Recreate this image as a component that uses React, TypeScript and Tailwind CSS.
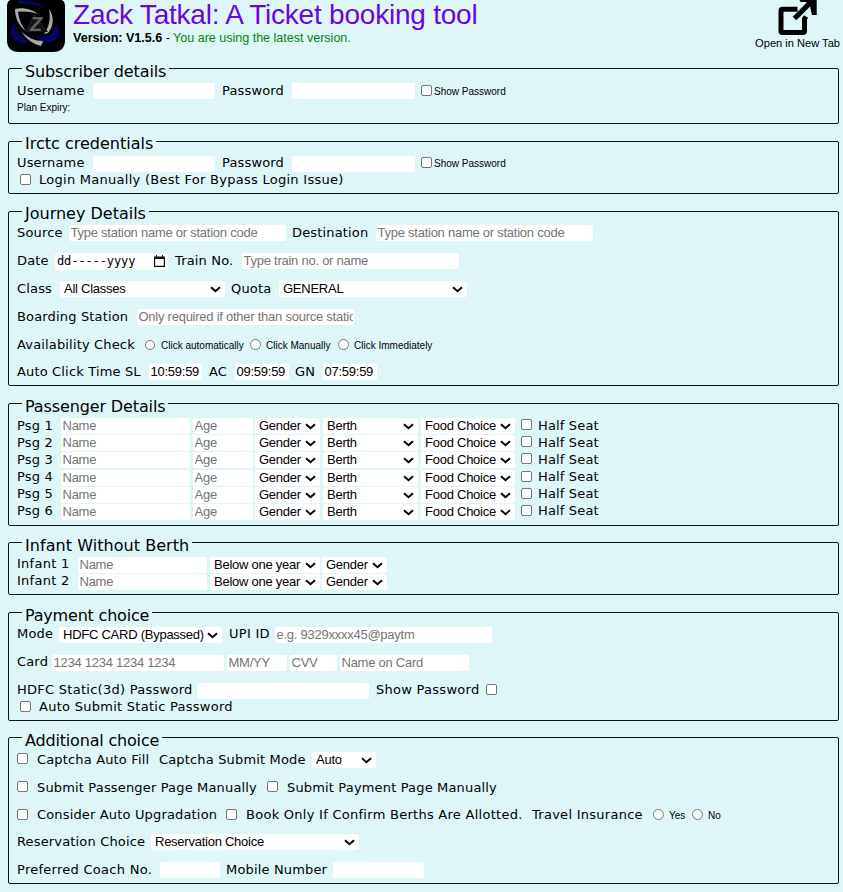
import React from "react";

const cx = (...parts: (string | undefined)[]) => parts.filter(Boolean).join(" ");

function Section({ title, className, legend = "leading-[21px]", children }: { title: string; className: string; legend?: string; children: React.ReactNode }) {
  return (
    <section className={cx("flex flex-col items-start rounded-[2px] border border-[#0c1414] pl-2", className)}>
      <h2 className={cx("-mt-2 ml-[5px] h-5 shrink-0 whitespace-nowrap bg-[#dff6f9] px-[3px] text-[16px]", legend)}>{title}</h2>
      {children}
    </section>
  );
}

function Row({ className, children }: { className?: string; children: React.ReactNode }) {
  return <div className={cx("flex h-4 shrink-0 items-center", className)}>{children}</div>;
}

interface LabelProps {
  className?: string;
  raised?: boolean;
  wide?: boolean;
  children: React.ReactNode;
}

function Label({ className, raised, wide, children }: LabelProps) {
  return (
    <span className={cx("shrink-0 whitespace-nowrap text-[13px] leading-4", raised ? "-mt-[2px]" : "mt-0", wide ? "tracking-[0.27px]" : "tracking-[0.16px]", className)}>
      {children}
    </span>
  );
}

function Small({ className = "mt-[2px]", children }: { className?: string; children: React.ReactNode }) {
  return <span className={cx("shrink-0 whitespace-nowrap font-['Liberation_Sans',Arial,sans-serif] text-[10px] leading-3", className)}>{children}</span>;
}

function Field({ className, placeholder, value }: { className: string; placeholder?: string; value?: string }) {
  return (
    <input
      className={cx(
        "h-4 shrink-0 rounded-[2px] bg-white pl-[1.5px] pr-px font-['Liberation_Sans',Arial,sans-serif] text-[13px] leading-4 tracking-[-0.25px] placeholder:text-[#757575] outline-none",
        className,
      )}
      placeholder={placeholder}
      defaultValue={value}
    />
  );
}

function Select({ className, children }: { className: string; children: string }) {
  return (
    <div className={cx("relative h-4 shrink-0", className)}>
      <select className="block h-full w-full appearance-none rounded-[2px] bg-white pl-1 font-['Liberation_Sans',Arial,sans-serif] text-[13px] leading-4 tracking-[-0.25px] outline-none">
        <option>{children}</option>
      </select>
      <svg className="pointer-events-none absolute right-1 top-[5px] h-[7px] w-[11px]" viewBox="0 0 11 7">
        <path d="M1 1.2 L5.5 5.2 L10 1.2" fill="none" stroke="#000" strokeWidth="2" />
      </svg>
    </div>
  );
}

function Check({ className }: { className?: string }) {
  return <input type="checkbox" className={cx("size-[11px] shrink-0 appearance-none rounded-[2px] border border-[#767676] bg-white", className)} />;
}

function Radio({ className, name }: { className?: string; name: string }) {
  return <input type="radio" name={name} className={cx("shrink-0 appearance-none rounded-full border border-[#767676] bg-white", className)} />;
}

function Logo() {
  return (
    <svg className="h-[52px] w-[58px] shrink-0" viewBox="0 0 58 52">
      <path d="M3 0H55Q58 2 58 6V40Q58 52 46 52H12Q0 52 0 40V6Q0 2 3 0Z" fill="#000" />
      <g fill="#03065f">
        <path d="M11 0 C18 3 29 -3 40 10 C31 3 21 5 14 4 C11 3 10 2 11 0Z" />
        <path d="M8 22 C1 30 3 42 17 43 L24 42 C16 40 9 34 8 22Z" />
        <path d="M49 23 C55 30 54 42 41 42 C36 43 31 39 29 35 C38 38 48 36 49 23Z" />
      </g>
      <g fill="#aaa7ae">
        <path d="M8 9 C15 7 25 9 31 14 C23 11.5 16 11 11 12 C12 20 15 26 19 31 C11 25 8 17 8 9Z" />
        <path d="M42 9 C48 17 46 28 41 33 L37 34 C42 27 44 19 42 9Z" />
        <path d="M14 31 C21 38 28 41 36 41 L34 46 C26 44 19 39 14 31Z" />
      </g>
      <path d="M18 32 L27 13 L41 32Z" fill="#151516" />
      <text x="29" y="31" textAnchor="middle" fontFamily="Liberation Sans, Arial, sans-serif" fontSize="20" fontWeight="700" fontStyle="italic" fill="#626365">Z</text>
    </svg>
  );
}

function Header() {
  return (
    <header className="flex h-[68px] items-start pl-[7px] font-['Liberation_Sans',Arial,sans-serif]">
      <Logo />
      <div className="ml-2 flex flex-col whitespace-nowrap">
        <h1 className="h-[30px] text-[28px] leading-[30px] tracking-[-0.22px] text-[#6b06df]">Zack Tatkal: A Ticket booking tool</h1>
        <p className="text-[12.6px] leading-4 tracking-[-0.03px]">
          <b>Version: V1.5.6</b> - <span className="text-[#078407]">You are using the latest version.</span>
        </p>
      </div>
      <div className="ml-auto mr-[3px] flex flex-col items-center">
        <svg className="h-[36px] w-[40px]" viewBox="0 0 40 36">
          <path d="M19.5 9.3H4.5Q3 9.3 3 10.8V31Q3 32.5 4.5 32.5H25Q26.5 32.5 26.5 31V19L28 16.5" fill="none" stroke="#000" strokeWidth="5" />
          <path d="M16.5 18.5 L36 -1" stroke="#000" strokeWidth="5.2" />
          <path d="M21.5 0H38.7V15H33.9L32 6 L28 2H22.5Z" fill="#000" />
        </svg>
        <span className="mt-px text-[11.1px] leading-3 whitespace-nowrap">Open in New Tab</span>
      </div>
    </header>
  );
}

const passengers = [
  { n: 1, gap: "mt-[2px]", raised: false },
  { n: 2, gap: "mt-px", raised: false },
  { n: 3, gap: "mt-px", raised: false },
  { n: 4, gap: "mt-[2px]", raised: true },
  { n: 5, gap: "mt-px", raised: true },
  { n: 6, gap: "mt-px", raised: true },
];

export default function App() {
  return (
    <main className="h-[892px] w-[843px] overflow-hidden bg-[#dff6f9] font-['DejaVu_Sans',Verdana,sans-serif] text-black">
      <Header />
      <div className="flex flex-col gap-[17px] pl-2 pr-1">
        <Section title="Subscriber details" className="h-[56px]" legend="leading-[21px] tracking-[-0.13px]">
          <Row className="mt-[2px]">
            <Label className="w-[76px]">Username</Label>
            <Field className="mr-[7px] w-[122px]" />
            <Label className="w-[70px]">Password</Label>
            <Field className="mr-[6px] w-[123px]" />
            <Check className="-mt-[2px] mr-[2px]" />
            <Small>Show Password</Small>
          </Row>
          <Row>
            <Small className="mt-[2px] text-[9.6px]">Plan Expiry:</Small>
          </Row>
        </Section>

        <Section title="Irctc credentials" className="h-[53px]" legend="leading-[19px]">
          <Row className="mt-[2px]">
            <Label raised className="w-[76px]">Username</Label>
            <Field className="mr-[7px] w-[122px]" />
            <Label raised className="w-[70px]">Password</Label>
            <Field className="mr-[6px] w-[123px]" />
            <Check className="-mt-[3px] mr-[2px]" />
            <Small className="mt-0">Show Password</Small>
          </Row>
          <Row>
            <Check className="-mt-px ml-[3px] mr-2" />
            <Label wide>Login Manually (Best For Bypass Login Issue)</Label>
          </Row>
        </Section>

        <Section title="Journey Details" className="h-[175px]" legend="leading-[19px]">
          <Row className="mt-px">
            <Label className="w-[52px]">Source</Label>
            <Field className="mr-[6px] w-[217px]" placeholder="Type station name or station code" />
            <Label className="w-[84px]">Destination</Label>
            <Field className="w-[217px]" placeholder="Type station name or station code" />
          </Row>
          <Row className="mt-3">
            <Label className="w-[38px]">Date</Label>
            <div className="mr-[7px] flex h-[17px] w-[113px] shrink-0 items-center justify-between rounded-[2px] bg-white pl-[2px] pr-[3px]">
              <span className="font-['DejaVu_Sans_Mono',monospace] text-[12px] leading-4 tracking-[-0.1px]">dd-----yyyy</span>
              <svg className="h-3 w-[11px]" viewBox="0 0 11 12">
                <path d="M0 1.5H2V0H3V1.5H8V0H9V1.5H11V12H0ZM1.2 4V10.8H9.8V4Z" fill="#111" fillRule="evenodd" />
              </svg>
            </div>
            <Label className="w-[67px]">Train No.</Label>
            <Field className="w-[217px]" placeholder="Type train no. or name" />
          </Row>
          <Row className="mt-3">
            <Label className="w-[43px]">Class</Label>
            <Select className="mr-[6px] w-[165px]">All Classes</Select>
            <Label className="w-[48px]">Quota</Label>
            <Select className="w-[188px]">GENERAL</Select>
          </Row>
          <Row className="mt-3">
            <Label className="w-[120px]">Boarding Station</Label>
            <Field className="w-[217px]" placeholder="Only required if other than source station" />
          </Row>
          <Row className="mt-3">
            <Label className="w-[128px]">Availability Check</Label>
            <Radio name="availability" className="-mt-px mr-[6px] size-[10px]" />
            <Small className="mt-[2px] w-[89px]">Click automatically</Small>
            <Radio name="availability" className="-mt-px mr-[5px] size-[11px]" />
            <Small className="mt-[2px] w-[72px]">Click Manually</Small>
            <Radio name="availability" className="-mt-px mr-[5px] size-[11px]" />
            <Small>Click Immediately</Small>
          </Row>
          <Row className="mt-[11px]">
            <Label className="w-[132px]">Auto Click Time SL</Label>
            <Field className="mr-[7px] w-[53px]" value="10:59:59" />
            <Label className="w-[26px]">AC</Label>
            <Field className="mr-[6px] w-[54px]" value="09:59:59" />
            <Label className="w-[28px]">GN</Label>
            <Field className="w-[54px]" value="07:59:59" />
          </Row>
        </Section>

        <Section title="Passenger Details" className="h-[123px]" legend="leading-[21px] tracking-[-0.12px]">
          {passengers.map((p) => (
            <Row key={p.n} className={p.gap}>
              <Label raised={p.raised} className="w-[44px]">Psg {p.n}</Label>
              <Field className="mr-[3px] w-[129px]" placeholder="Name" />
              <Field className="mr-[2px] w-[60px]" placeholder="Age" />
              <Select className="mr-[3px] w-[65px]">Gender</Select>
              <Select className="mr-[3px] w-[95px]">Berth</Select>
              <Select className="mr-[6px] w-[94px]">Food Choice</Select>
              <Check className="-mt-[3px] mr-[6px]" />
              <Label raised={p.raised}>Half Seat</Label>
            </Row>
          ))}
        </Section>

        <Section title="Infant Without Berth" className="-mt-px h-[53px]" legend="leading-[21px] tracking-[0.05px]">
          {[1, 2].map((n) => (
            <Row key={n} className={n === 1 ? "mt-[2px]" : "mt-px"}>
              <Label raised wide className="w-[61px]">Infant {n}</Label>
              <Field className="mr-[3px] w-[129px]" placeholder="Name" />
              <Select className="mr-[2px] w-[110px]">Below one year</Select>
              <Select className="w-[65px]">Gender</Select>
            </Row>
          ))}
        </Section>

        <Section title="Payment choice" className="h-[109px]" legend="leading-[21px] tracking-[-0.2px]">
          <Row className="mt-[2px]">
            <Label raised className="w-[42px]">Mode</Label>
            <Select className="mr-[7px] w-[163px]">HDFC CARD (Bypassed)</Select>
            <Label raised wide className="w-[46px]">UPI ID</Label>
            <Field className="w-[217px]" placeholder="e.g. 9329xxxx45@paytm" />
          </Row>
          <Row className="mt-3">
            <Label raised className="w-[35px]">Card</Label>
            <Field className="mr-[3px] w-[172px]" placeholder="1234 1234 1234 1234" />
            <Field className="mr-[3px] w-[60px]" placeholder="MM/YY" />
            <Field className="mr-[3px] w-[47px]" placeholder="CVV" />
            <Field className="w-[129px]" placeholder="Name on Card" />
          </Row>
          <Row className="mt-3">
            <Label raised wide className="w-[180px]">HDFC Static(3d) Password</Label>
            <Field className="mr-[7px] w-[172px]" />
            <Label raised wide className="w-[110px]">Show Password</Label>
            <Check className="-mt-[3px]" />
          </Row>
          <Row>
            <Check className="-mt-px ml-[3px] mr-2" />
            <Label wide>Auto Submit Static Password</Label>
          </Row>
        </Section>

        <Section title="Additional choice" className="-mt-px h-[147px]" legend="leading-[21px] tracking-[-0.18px]">
          <Row className="mt-[2px]">
            <Check className="-mt-[3px] mr-[9px]" />
            <Label className="w-[122px]">Captcha Auto Fill</Label>
            <Label className="w-[153px]">Captcha Submit Mode</Label>
            <Select className="w-[64px]">Auto</Select>
          </Row>
          <Row className="mt-3">
            <Check className="-mt-[3px] mr-[9px]" />
            <Label className="w-[230px]">Submit Passenger Page Manually</Label>
            <Check className="-mt-[3px] mr-[9px]" />
            <Label>Submit Payment Page Manually</Label>
          </Row>
          <Row className="mt-[11px]">
            <Check className="-mt-px mr-[9px]" />
            <Label className="w-[189px]">Consider Auto Upgradation</Label>
            <Check className="-mt-px mr-[9px]" />
            <Label wide className="w-[286px]">Book Only If Confirm Berths Are Allotted.</Label>
            <Label wide className="w-[121px]">Travel Insurance</Label>
            <Radio name="insurance" className="-mt-px mr-[5px] size-[11px]" />
            <Small className="mt-[2px] w-[23px]">Yes</Small>
            <Radio name="insurance" className="-mt-px mr-[5px] size-[11px]" />
            <Small>No</Small>
          </Row>
          <Row className="mt-[11px]">
            <Label className="w-[134px]">Reservation Choice</Label>
            <Select className="w-[208px]">Reservation Choice</Select>
          </Row>
          <Row className="mt-3">
            <Label wide className="w-[143px]">Preferred Coach No.</Label>
            <Field className="mr-[6px] w-[60px]" />
            <Label className="w-[107px]">Mobile Number</Label>
            <Field className="w-[91px]" />
          </Row>
        </Section>
      </div>
    </main>
  );
}
